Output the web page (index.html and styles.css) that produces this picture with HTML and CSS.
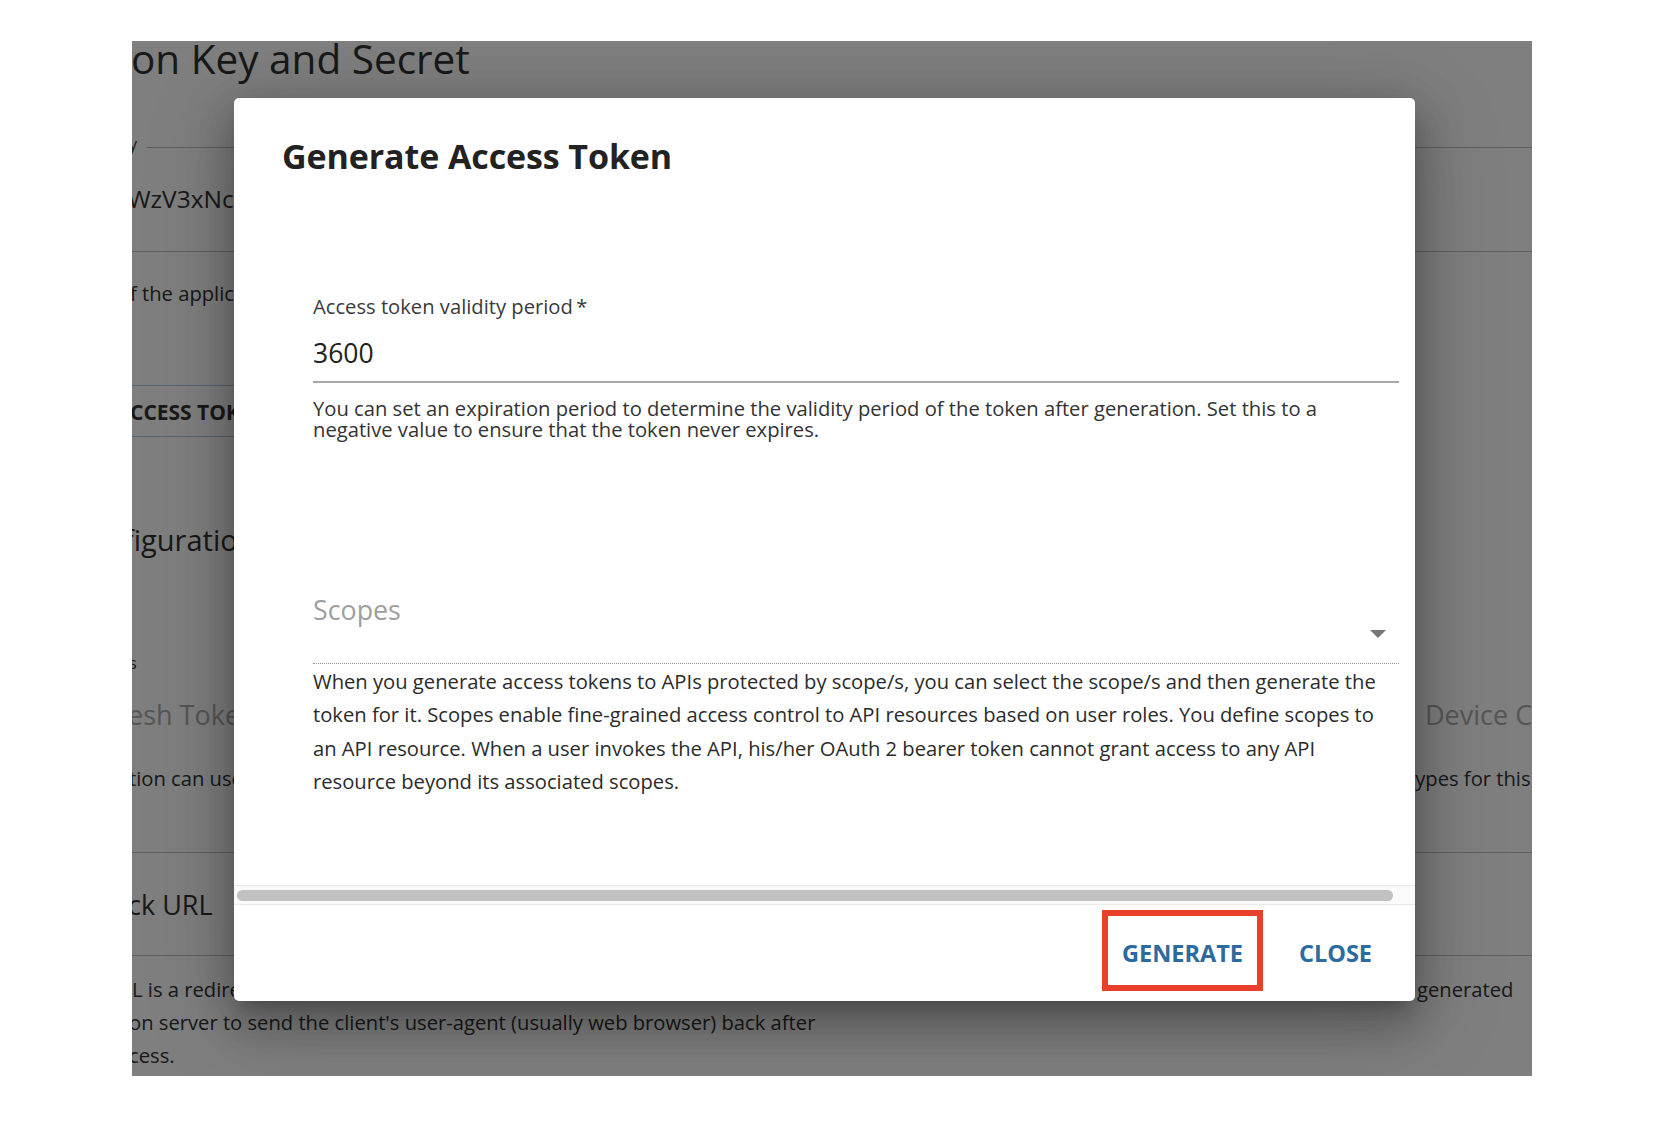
FILE: index.html
```html
<!DOCTYPE html>
<html lang="en">
<head>
<meta charset="utf-8">
<title>Generate Access Token</title>
<link rel="stylesheet" href="styles.css">
</head>
<body>
<div class="stage">
  <div class="page">
    <div class="bg">
      <h1 class="bg-title">on Key and Secret</h1>
      <div class="bg-field">
        <div class="bg-legend"><span class="bg-legend-text">y</span><span class="bg-legend-line"></span></div>
        <div class="bg-value">WzV3xNc</div>
      </div>
      <p class="bg-note">f the applic</p>
      <div class="bg-button">CCESS TOKEN</div>
      <h2 class="bg-h2">figuration</h2>
      <div class="bg-small">s</div>
      <div class="bg-row bg-grant"><span class="l l-grant">esh Token</span><span class="r">Device Code</span></div>
      <div class="bg-row bg-text"><span class="l l-text">tion can use</span><span class="r">types for this application</span></div>
      <div class="bg-rule rule-a"></div>
      <h3 class="bg-h3">ck URL</h3>
      <div class="bg-rule rule-b"></div>
      <div class="bg-para">
        <div class="bg-row"><span class="l l-para">L is a redirect</span><span class="r">generated</span></div>
        <div class="bg-line">on server to send the client's user-agent (usually web browser) back after</div>
        <div class="bg-line">cess.</div>
      </div>
    </div>
    <div class="overlay"></div>
    <div class="dialog" role="dialog" aria-labelledby="dlg-title">
      <h2 class="dialog-title" id="dlg-title">Generate Access Token</h2>
      <div class="dialog-content">
        <div class="field-label">Access token validity period&thinsp;*</div>
        <div class="field-input">3600</div>
        <div class="field-help">You can set an expiration period to determine the validity period of the token after generation. Set this to a negative value to ensure that the token never expires.</div>
        <div class="select-label">Scopes</div>
        <div class="select-input">
          <svg class="select-arrow" width="16" height="8" viewBox="0 0 16 8"><path d="M0 0h16L8 8z" fill="#767676"/></svg>
        </div>
        <div class="select-help">When you generate access tokens to APIs protected by scope/s, you can select the scope/s and then generate the token for it. Scopes enable fine-grained access control to API resources based on user roles. You define scopes to an API resource. When a user invokes the API, his/her OAuth 2 bearer token cannot grant access to any API resource beyond its associated scopes.</div>
      </div>
      <div class="scrollbar"><div class="scroll-thumb"></div></div>
      <div class="actions">
        <span class="highlight"><button class="btn">GENERATE</button></span>
        <button class="btn btn-close">CLOSE</button>
      </div>
    </div>
  </div>
</div>
</body>
</html>
```
FILE: styles.css
```css
* { box-sizing: border-box; }
body {
  margin: 0;
  background: #ffffff;
  font-family: "Open Sans", "Noto Sans", sans-serif;
}
.stage { padding: 41px 0 0 132px; }
.page {
  position: relative;
  width: 1400px;
  height: 1035px;
  overflow: hidden;
  background: #ffffff;
  color: #333333;
}
.bg { display: flex; flex-direction: column; white-space: nowrap; }
.bg-title {
  margin: 0 0 0 -1px;
  font-size: 40.5px;
  font-weight: 400;
  line-height: 36px;
  height: 36px;
}
.bg-field {
  margin-top: 57px;
  padding-bottom: 37px;
  border-bottom: 1px solid #bdbdbd;
}
.bg-legend { display: flex; height: 20px; }
.bg-legend-text { font-size: 16px; line-height: 20px; margin-left: -3px; }
.bg-legend-line { flex: 1; height: 1px; background: #bdbdbd; margin: 13px 0 0 10px; }
.bg-value { margin: 30px 0 0 -4px; font-size: 24.5px; line-height: 30px; }
.bg-note { margin: 29px 0 0 -2px; font-size: 20.2px; line-height: 24px; }
.bg-button {
  margin: 80px 0 0 -2px;
  width: 320px;
  height: 52px;
  padding-top: 3px;
  border-top: 1px solid #a9c6e4;
  border-bottom: 1px solid #a9c6e4;
  font-size: 21px;
  font-weight: 700;
  line-height: 47px;
}
.bg-h2 { margin: 83px 0 0 -8px; font-size: 29px; font-weight: 400; line-height: 40px; }
.bg-small { margin: 93px 0 0 -3px; font-size: 16px; line-height: 20px; }
.bg-row { display: flex; }
.bg-row .l { flex: none; }
.bg-grant { margin-top: 25px; font-size: 27px; line-height: 34px; color: #adadad; }
.l-grant { width: 1293px; text-indent: -4px; }
.bg-text { margin-top: 34px; font-size: 20.2px; line-height: 24px; }
.l-text { width: 1276px; text-indent: -3px; }
.bg-rule { height: 1px; background: #bdbdbd; }
.rule-a { margin-top: 62px; }
.bg-h3 { margin: 35px 0 0 -4px; font-size: 27px; font-weight: 400; line-height: 34px; }
.rule-b { margin-top: 33px; }
.bg-para { margin-top: 17px; font-size: 20.2px; line-height: 33px; }
.l-para { width: 1285px; }
.bg-line { margin-left: -3px; }

.overlay {
  position: absolute;
  inset: 0;
  background: rgba(0, 0, 0, 0.5);
}

.dialog {
  position: absolute;
  left: 102px;
  top: 57px;
  width: 1181px;
  height: 903px;
  display: flex;
  flex-direction: column;
  background: #ffffff;
  border-radius: 5px;
  overflow: hidden;
  color: #212121;
  box-shadow: 0 11px 15px -7px rgba(0,0,0,0.2), 0 24px 38px 3px rgba(0,0,0,0.14), 0 9px 46px 8px rgba(0,0,0,0.12), 0 20px 90px 10px rgba(0,0,0,0.14);
}
.dialog-title {
  margin: 0;
  padding: 41px 0 0 48px;
  font-size: 34px;
  line-height: 35px;
  font-weight: 700;
  letter-spacing: -0.1px;
  color: #222222;
}
.dialog-content {
  flex: 1;
  min-height: 0;
  padding: 120px 16px 0 79px;
}
.field-label { font-size: 20.2px; line-height: 24px; color: #3a3a3a; }
.field-input {
  margin-top: 20px;
  padding-bottom: 13px;
  font-size: 26.5px;
  line-height: 30px;
  color: #222222;
  border-bottom: 2px solid #a8a8a8;
}
.field-help { margin-top: 15px; font-size: 20.2px; line-height: 21px; color: #333333; }
.select-label { margin-top: 155px; font-size: 26.8px; line-height: 30px; color: #9e9e9e; }
.select-input {
  height: 39px;
  display: flex;
  justify-content: flex-end;
  border-bottom: 1px dotted #8f8f8f;
}
.select-arrow { margin: 5px 13px 0 0; }
.select-help { margin-top: 1px; font-size: 20.2px; line-height: 33.3px; color: #2b2b2b; }

.scrollbar {
  height: 20px;
  flex: none;
  border-top: 1px solid #ebebeb;
  border-bottom: 1px solid #ebebeb;
  background: #fafafa;
  padding: 4px 0 0 3px;
}
.scroll-thumb { width: 1156px; height: 11px; border-radius: 6px; background: #c1c1c1; }

.actions {
  height: 96px;
  flex: none;
  display: flex;
  justify-content: flex-end;
  align-items: baseline;
  gap: 36px;
  padding: 5px 43px 0 0;
}
.highlight {
  display: block;
  width: 161px;
  height: 81px;
  border: 6px solid #e8402a;
  padding-top: 23px;
  text-align: center;
}
.btn {
  padding: 0;
  border: 0;
  background: none;
  font-family: inherit;
  font-size: 23.5px;
  line-height: 28px;
  font-weight: 700;
  color: #2c6b9e;
}
```
